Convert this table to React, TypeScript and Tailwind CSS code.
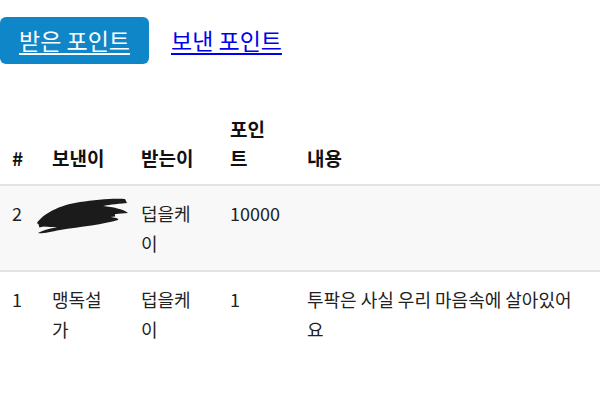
const rows = [
  { id: "2", sender: "", receiver: "덥을케이", points: "10000", content: "", redacted: true },
  { id: "1", sender: "맹독설가", receiver: "덥을케이", points: "1", content: "투팍은 사실 우리 마음속에 살아있어요", redacted: false },
];

function Scribble() {
  return (
    <svg
      viewBox="0 0 96 40"
      className="absolute left-[-5px] top-[10px] h-[40px] w-[96px]"
      aria-hidden="true"
    >
      <path
        d="M2 27C8 18 24 9 45 6C60 4 78 2 90 3L92 7C80 8 72 9 68 10C78 11 88 13 93 17C85 18 74 18 68 20C77 21 85 22 83 24C70 28 45 31 25 34C15 36 6 38 3 37C8 34 18 32 22 31C12 31 5 31 2 27Z"
        fill="#1b1b1b"
      />
      <path d="M4 30C20 26 50 22 80 19" stroke="#1b1b1b" strokeWidth="3" fill="none" />
    </svg>
  );
}

export default function App() {
  return (
    <div
      className="h-[400px] w-[600px] overflow-hidden bg-white pt-[17px] text-[#212529]"
      style={{ fontFamily: '"Noto Sans CJK KR", "Noto Sans", sans-serif' }}
    >
      <div className="flex items-center gap-[22px]">
        <a className="flex h-[47px] w-[149px] items-center justify-center rounded-[6px] bg-[#0f86c8] text-[23px] text-white underline underline-offset-[3px]">
          받은 포인트
        </a>
        <a className="text-[23px] text-[#0000ee] underline underline-offset-[3px]">
          보낸 포인트
        </a>
      </div>

      <table className="mt-[38px] w-full table-fixed border-collapse">
        <colgroup>
          <col className="w-[40px]" />
          <col className="w-[89px]" />
          <col className="w-[89px]" />
          <col className="w-[77px]" />
          <col />
        </colgroup>
        <thead>
          <tr className="border-b-2 border-[#e2e3e5] text-left align-bottom text-[19px] font-bold leading-[29px] text-[#111]">
            <th className="p-[12px] font-bold">#</th>
            <th className="p-[12px] font-bold">보낸이</th>
            <th className="p-[12px] font-bold">받는이</th>
            <th className="py-[12px] pl-[12px] pr-[16px] font-bold">포인트</th>
            <th className="p-[12px] font-bold">내용</th>
          </tr>
        </thead>
        <tbody className="text-[18px] leading-[30px] text-[#222]">
          {rows.map((r, i) => (
            <tr
              key={r.id}
              className={`align-top ${i === 0 ? "border-b-2 border-[#e2e3e5] bg-[#f8f8f8]" : "bg-white"}`}
            >
              <td className="p-[12px]">{r.id}</td>
              <td className="relative py-[12px] pl-[12px] pr-[20px]">
                {r.redacted ? <Scribble /> : r.sender}
              </td>
              <td className="py-[12px] pl-[12px] pr-[20px]">{r.receiver}</td>
              <td className="p-[12px]">{r.points}</td>
              <td className="py-[12px] pl-[12px] pr-[21px]">{r.content}</td>
            </tr>
          ))}
        </tbody>
      </table>
    </div>
  );
}
